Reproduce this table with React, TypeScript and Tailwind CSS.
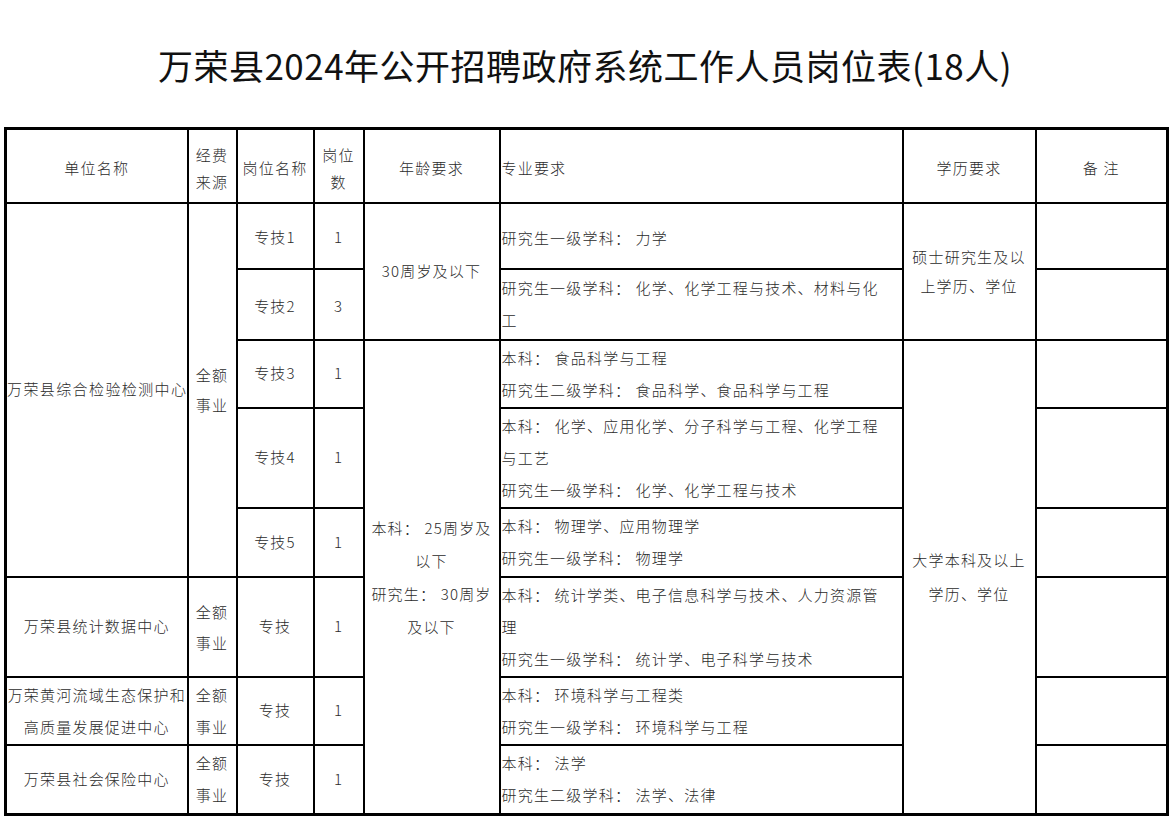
const font = { fontFamily: '"Noto Sans CJK SC", "Noto Sans", sans-serif' }

type Line = string

function Lines({ lines, className = "" }: { lines: Line[]; className?: string }) {
  return (
    <div className={className}>
      {lines.map((l, i) => (
        <div key={i} className="whitespace-nowrap">
          {l}
        </div>
      ))}
    </div>
  )
}

const cell = "border-2 border-black p-0 align-middle text-center"
const major = "border-2 border-black p-0 pl-[1px] align-middle text-left leading-[32px]"

export default function App() {
  return (
    <div className="min-h-[818px] w-[1170px] bg-white text-[#2b2b2b]" style={font}>
      {/* Title */}
      <h1 className="pt-[40px] text-center text-[35px] font-normal leading-[50px] tracking-[0.5px] text-[#111]">
        万荣县2024年公开招聘政府系统工作人员岗位表(18人)
      </h1>

      <table className="ml-[4px] mt-[37px] w-[1162px] table-fixed border-collapse border-[3px] border-black text-[15px] font-light tracking-[1.2px]">
        <colgroup>
          <col className="w-[182px]" />
          <col className="w-[49px]" />
          <col className="w-[77px]" />
          <col className="w-[50px]" />
          <col className="w-[136px]" />
          <col className="w-[403px]" />
          <col className="w-[133px]" />
          <col className="w-[132px]" />
        </colgroup>
        <tbody>
          {/* Header */}
          <tr className="h-[74px]">
            <td className={cell + " pt-[4px]"}>单位名称</td>
            <td className={cell + " pt-[4px]"}>
              <Lines lines={["经费", "来源"]} className="leading-[27px]" />
            </td>
            <td className={cell + " pt-[4px]"}>岗位名称</td>
            <td className={cell + " pt-[4px]"}>
              <Lines lines={["岗位", "数"]} className="leading-[27px]" />
            </td>
            <td className={cell + " pt-[4px]"}>年龄要求</td>
            <td className={major + " pt-[4px]"}>专业要求</td>
            <td className={cell + " pt-[4px]"}>学历要求</td>
            <td className={cell + " pt-[4px]"}>备 注</td>
          </tr>

          {/* 万荣县综合检验检测中心 */}
          <tr className="h-[66px]">
            <td rowSpan={5} className={cell + " text-left"}>
              <div className="whitespace-nowrap tracking-[1.4px]">万荣县综合检验检测中心</div>
            </td>
            <td rowSpan={5} className={cell}>
              <Lines lines={["全额", "事业"]} className="leading-[30px]" />
            </td>
            <td className={cell + " pt-[4px]"}>专技1</td>
            <td className={cell + " pt-[4px]"}>1</td>
            <td rowSpan={2} className={cell}>30周岁及以下</td>
            <td className={major + " pt-[4px]"}>
              <Lines lines={["研究生一级学科： 力学"]} />
            </td>
            <td rowSpan={2} className={cell}>
              <Lines lines={["硕士研究生及以", "上学历、学位"]} className="leading-[29px]" />
            </td>
            <td className={cell}></td>
          </tr>
          <tr className="h-[71px]">
            <td className={cell + " pt-[4px]"}>专技2</td>
            <td className={cell + " pt-[4px]"}>3</td>
            <td className={major}>
              <Lines lines={["研究生一级学科： 化学、化学工程与技术、材料与化", "工"]} />
            </td>
            <td className={cell}></td>
          </tr>
          <tr className="h-[68px]">
            <td className={cell}>专技3</td>
            <td className={cell}>1</td>
            <td rowSpan={6} className={cell}>
              <Lines
                lines={["本科： 25周岁及", "以下", "研究生： 30周岁", "及以下"]}
                className="leading-[33px]"
              />
            </td>
            <td className={major}>
              <Lines lines={["本科： 食品科学与工程", "研究生二级学科： 食品科学、食品科学与工程"]} />
            </td>
            <td rowSpan={6} className={cell}>
              <Lines lines={["大学本科及以上", "学历、学位"]} className="leading-[34px]" />
            </td>
            <td className={cell}></td>
          </tr>
          <tr className="h-[100px]">
            <td className={cell}>专技4</td>
            <td className={cell}>1</td>
            <td className={major}>
              <Lines
                lines={[
                  "本科： 化学、应用化学、分子科学与工程、化学工程",
                  "与工艺",
                  "研究生一级学科： 化学、化学工程与技术",
                ]}
              />
            </td>
            <td className={cell}></td>
          </tr>
          <tr className="h-[69px]">
            <td className={cell}>专技5</td>
            <td className={cell}>1</td>
            <td className={major}>
              <Lines lines={["本科： 物理学、应用物理学", "研究生一级学科： 物理学"]} />
            </td>
            <td className={cell}></td>
          </tr>

          {/* 其他单位 */}
          <tr className="h-[100px]">
            <td className={cell}>万荣县统计数据中心</td>
            <td className={cell}>
              <Lines lines={["全额", "事业"]} className="leading-[31px]" />
            </td>
            <td className={cell}>专技</td>
            <td className={cell}>1</td>
            <td className={major}>
              <Lines
                lines={[
                  "本科： 统计学类、电子信息科学与技术、人力资源管",
                  "理",
                  "研究生一级学科： 统计学、电子科学与技术",
                ]}
              />
            </td>
            <td className={cell}></td>
          </tr>
          <tr className="h-[68px]">
            <td className={cell}>
              <Lines lines={["万荣黄河流域生态保护和", "高质量发展促进中心"]} className="leading-[32px]" />
            </td>
            <td className={cell}>
              <Lines lines={["全额", "事业"]} className="leading-[32px]" />
            </td>
            <td className={cell}>专技</td>
            <td className={cell}>1</td>
            <td className={major}>
              <Lines lines={["本科： 环境科学与工程类", "研究生一级学科： 环境科学与工程"]} />
            </td>
            <td className={cell}></td>
          </tr>
          <tr className="h-[70px]">
            <td className={cell}>万荣县社会保险中心</td>
            <td className={cell}>
              <Lines lines={["全额", "事业"]} className="leading-[32px]" />
            </td>
            <td className={cell}>专技</td>
            <td className={cell}>1</td>
            <td className={major}>
              <Lines lines={["本科： 法学", "研究生二级学科： 法学、法律"]} />
            </td>
            <td className={cell}></td>
          </tr>
        </tbody>
      </table>
    </div>
  )
}
